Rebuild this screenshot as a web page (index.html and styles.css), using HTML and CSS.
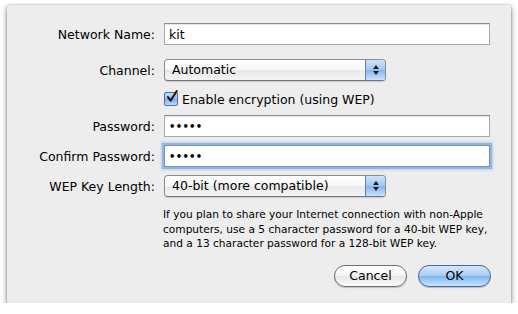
FILE: index.html
```html
<!DOCTYPE html>
<html lang="en">
<head>
  <meta charset="UTF-8">
  <title>Network Settings</title>
  <link rel="stylesheet" href="styles.css">
</head>
<body>

  <div class="sheet">
    <div class="row row-name">
      <label class="label">Network Name:</label>
      <div class="field">kit</div>
    </div>

    <div class="row row-channel">
      <label class="label">Channel:</label>
      <div class="popup">
        <span class="popup-text">Automatic</span>
        <span class="popup-arrows"><i class="up"></i><i class="down"></i></span>
      </div>
    </div>

    <div class="row row-check">
      <span class="label"></span>
      <span class="checkbox">
        <svg width="14" height="14" viewBox="0 0 14 14">
          <path d="M3 7.2 L5.6 10.6 L11.6 1.2" fill="none" stroke="#1a1a1a" stroke-width="2.1" stroke-linecap="round" stroke-linejoin="round"/>
        </svg>
      </span>
      <span class="check-text">Enable encryption (using WEP)</span>
    </div>

    <div class="row row-pass">
      <label class="label">Password:</label>
      <div class="field dots">•••••</div>
    </div>

    <div class="row row-confirm">
      <label class="label">Confirm Password:</label>
      <div class="field dots focused">•••••</div>
    </div>

    <div class="row row-wep">
      <label class="label">WEP Key Length:</label>
      <div class="popup">
        <span class="popup-text">40-bit (more compatible)</span>
        <span class="popup-arrows"><i class="up"></i><i class="down"></i></span>
      </div>
    </div>

    <p class="help">If you plan to share your Internet connection with non-Apple computers, use a 5 character password for a 40-bit WEP key, and a 13 character password for a 128-bit WEP key.</p>

    <div class="actions">
      <button class="btn">Cancel</button>
      <button class="btn btn-default">OK</button>
    </div>
  </div>

</body>
</html>
```

FILE: styles.css
```css
body {
  margin: 0;
  padding: 5px 0 0 7px;
  background: #ffffff;
  font-family: "DejaVu Sans", sans-serif;
  font-size: 12.5px;
  color: #000;
}
.sheet {
  width: 504px;
  height: 298px;
  box-sizing: border-box;
  padding-top: 18px;
  background: #ededed;
  box-shadow: 0 3px 6px rgba(0, 0, 0, 0.45), 0 0 2px rgba(0, 0, 0, 0.3);
}
.row {
  display: flex;
  align-items: center;
  height: 22px;
}
.label {
  width: 148px;
  flex: none;
  text-align: right;
  margin-right: 9px;
}
.row-channel { margin-top: 14px; }
.row-check { margin-top: 10px; height: 16px; }
.row-pass { margin-top: 8px; }
.row-confirm { margin-top: 8px; }
.row-wep { margin-top: 8px; }

/* text fields */
.field {
  width: 326px;
  height: 22px;
  box-sizing: border-box;
  padding: 2px 4px;
  background: #fff;
  border: 1px solid #a9a9a9;
  border-top-color: #8c8c8c;
  box-shadow: inset 0 1px 0 #e4e4e4;
  line-height: 17px;
}
.dots {
  font-size: 10px;
  letter-spacing: 0.3px;
  font-weight: bold;
}
.focused {
  border-color: #6d94c9;
  box-shadow: 0 0 0 2px #94b6e2, 0 0 2px 3px rgba(120, 160, 215, 0.4);
}

/* popup buttons */
.popup {
  width: 222px;
  height: 22px;
  box-sizing: border-box;
  display: flex;
  border: 1px solid #8e8e8e;
  border-bottom-color: #777;
  border-radius: 4px;
  background: linear-gradient(#ffffff, #f6f6f6 50%, #e9e9e9 51%, #f4f4f4);
  box-shadow: 0 1px 1px rgba(0, 0, 0, 0.15);
  overflow: hidden;
}
.popup-text {
  flex: 1;
  padding-left: 7px;
  line-height: 20px;
}
.popup-arrows {
  width: 19px;
  border-left: 1px solid #5d80b7;
  background: linear-gradient(#cfe3fa, #a2c7f0 50%, #86b6ec 51%, #c8e2fb);
  display: flex;
  flex-direction: column;
  align-items: center;
  justify-content: center;
  gap: 2px;
}
.popup-arrows i {
  width: 0;
  height: 0;
  border-left: 3px solid transparent;
  border-right: 3px solid transparent;
}
.popup-arrows .up { border-bottom: 4px solid #1b1b1b; }
.popup-arrows .down { border-top: 4px solid #1b1b1b; }

/* checkbox */
.checkbox {
  width: 14px;
  height: 14px;
  box-sizing: border-box;
  border: 1px solid #4a6fa8;
  border-radius: 2px;
  background: linear-gradient(#c6ddf7, #94bdea 50%, #79aee8 51%, #bcdcf9);
  margin-right: 4px;
  position: relative;
}
.checkbox svg {
  position: absolute;
  left: 0;
  top: -3px;
}

.help {
  margin: 10px 0 0 156px;
  width: 334px;
  font-size: 10.6px;
  line-height: 14.5px;
}

/* bottom buttons */
.actions {
  display: flex;
  justify-content: flex-end;
  gap: 11px;
  padding-right: 20px;
  margin-top: 14px;
}
.btn {
  width: 73px;
  height: 22px;
  border-radius: 11px;
  border: 1px solid #6f6f6f;
  background: linear-gradient(#ffffff, #f4f4f4 50%, #e6e6e6 51%, #fbfbfb);
  font-family: "DejaVu Sans", sans-serif;
  font-size: 12.5px;
  padding: 0;
  box-shadow: 0 1px 1px rgba(0, 0, 0, 0.2);
}
.btn-default {
  border-color: #4566a0;
  background: linear-gradient(#d5e8fb, #a6cbf2 50%, #7fb6ee 51%, #c7e6fe);
}
```
